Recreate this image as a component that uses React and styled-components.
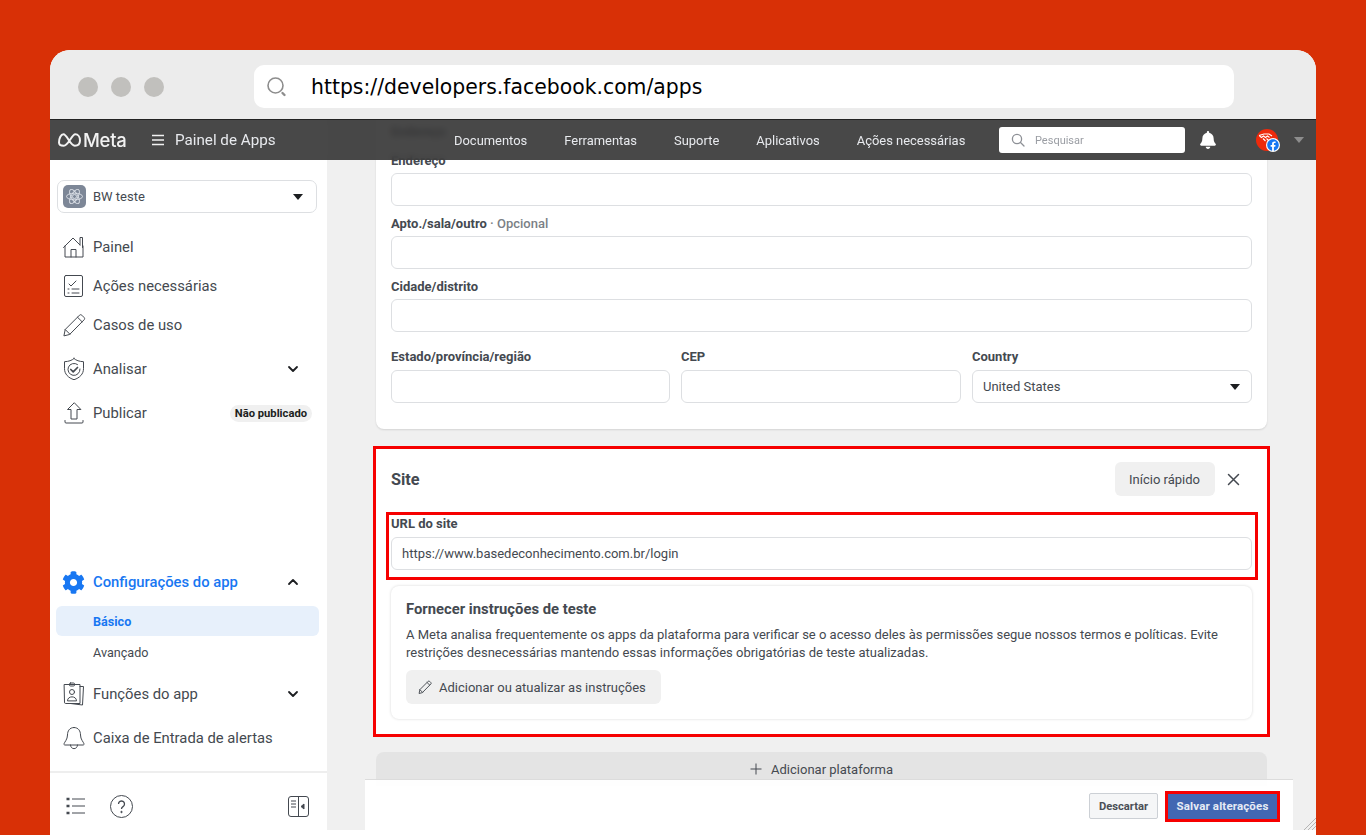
import React from 'react';
import styled, { createGlobalStyle } from 'styled-components';
import { FaBell, FaCog, FaFacebook } from 'react-icons/fa';

const Global = createGlobalStyle`
  html, body { margin: 0; padding: 0; height: 100%; overflow: hidden; }
  body { background: #d83006; font-family: Roboto, "Liberation Sans", sans-serif; color: #444950; }
  * { box-sizing: border-box; }
`;

const Page = styled.div`
  height: 835px;
  padding: 50px 50px 0;
`;
const Win = styled.div`
  height: 785px;
  display: flex;
  flex-direction: column;
  border-radius: 20px 20px 0 0;
  overflow: hidden;
  background: #fff;
`;
const Chrome = styled.header`
  height: 70px;
  flex: none;
  display: flex;
  align-items: flex-start;
  padding: 15px 0 0 28px;
  background: #ececec;
  border-bottom: 1px solid #222;
`;
const Dots = styled.div`
  display: flex;
  gap: 13px;
  margin-top: 12px;
`;
const Dot = styled.span`
  width: 20px;
  height: 20px;
  border-radius: 50%;
  background: #c1c0bd;
`;
const Address = styled.div`
  width: 980px;
  height: 43px;
  margin-left: 90px;
  display: flex;
  align-items: center;
  gap: 23px;
  padding-left: 12px;
  background: #fff;
  border-radius: 10px;
  font: 20.4px "DejaVu Sans", sans-serif;
  color: #000;
`;
const Body = styled.div`
  position: relative;
  flex: 1;
  min-height: 0;
  display: flex;
`;
const Topbar = styled.nav`
  position: absolute;
  z-index: 5;
  top: 0;
  left: 0;
  right: 0;
  height: 40px;
  display: flex;
  align-items: center;
  padding-left: 8px;
  background: rgba(52, 52, 52, 0.9);
  backdrop-filter: blur(3px);
  color: #e8eaee;
`;
const Brand = styled.div`
  width: 94px;
  display: flex;
  align-items: center;
  gap: 2px;
  font: 500 18.5px Inter, sans-serif;
  letter-spacing: -0.3px;
  color: #f2f2f2;
`;
const MenuBtn = styled.div`
  display: flex;
  align-items: center;
  gap: 11px;
  width: 302px;
  font-size: 15.2px;
`;
const NavLinks = styled.div`
  display: flex;
  gap: 37px;
  width: 545px;
  font-size: 12.95px;
`;
const Search = styled.div`
  width: 186px;
  height: 26px;
  display: flex;
  align-items: center;
  gap: 10px;
  padding-left: 12px;
  background: #fff;
  border-radius: 3px;
  font-size: 11px;
  color: #9a9da3;
`;
const BellWrap = styled.div`
  display: flex;
  margin-left: 14px;
  color: #fff;
  font-size: 18px;
`;
const Avatar = styled.div`
  position: relative;
  width: 22px;
  height: 22px;
  margin-left: 39px;
  border-radius: 50%;
  background: #ee2a0c;
`;
const FbBadge = styled.span`
  position: absolute;
  right: -2px;
  bottom: -1px;
  width: 14px;
  height: 14px;
  display: flex;
  align-items: center;
  justify-content: center;
  border-radius: 50%;
  background: #fff;
  color: #1877f2;
  font-size: 12px;
`;
const GrayCaret = styled.span`
  width: 0;
  height: 0;
  margin-left: 16px;
  margin-top: -1px;
  border-left: 5px solid transparent;
  border-right: 5px solid transparent;
  border-top: 6px solid #8d8d8d;
`;
const Sidebar = styled.aside`
  width: 277px;
  flex: none;
  display: flex;
  flex-direction: column;
  padding-top: 60px;
  background: #fff;
  font-size: 14.8px;
`;
const AppSelect = styled.div`
  height: 33px;
  margin: 0 10px 14px 7px;
  display: flex;
  align-items: center;
  padding: 0 13px 0 5px;
  gap: 7px;
  border: 1px solid #dddfe2;
  border-radius: 7px;
  font-size: 13px;
`;
const AppIcon = styled.span`
  width: 23px;
  height: 23px;
  display: flex;
  align-items: center;
  justify-content: center;
  border-radius: 5px;
  background: #7d8797;
`;
const Grow = styled.span`
  flex: 1;
`;
const Caret = styled.span`
  width: 0;
  height: 0;
  border-left: 5.5px solid transparent;
  border-right: 5.5px solid transparent;
  border-top: 6px solid #1c1e21;
`;
const NavGroup = styled.div`
  padding: 0 8px 0 6px;
  margin-top: ${p => p.$mt || 0}px;
`;
const Row = styled.div`
  height: ${p => p.$h || 39}px;
  margin-bottom: ${p => p.$mb || 0}px;
  display: flex;
  align-items: center;
  color: ${p => (p.$active ? '#1877f2' : '#444950')};
  font-weight: ${p => (p.$active ? 500 : 400)};
`;
const IconSlot = styled.span`
  width: 37px;
  flex: none;
  display: flex;
  justify-content: flex-start;
  padding-left: 6px;
  color: ${p => p.$color || '#444950'};
`;
const Chevron = styled.svg`
  margin-right: 20px;
  color: #1c1e21;
`;
const Badge = styled.span`
  margin-right: 7px;
  padding: 2px 5px;
  border-radius: 9px;
  background: #f0f0f0;
  font-size: 11.2px;
  font-weight: 700;
  color: #1c1e21;
`;
const SubItem = styled.div`
  height: ${p => (p.$active ? 30 : 32)}px;
  margin-bottom: ${p => (p.$mb || 0)}px;
  display: flex;
  align-items: center;
  padding-left: 37px;
  border-radius: 6px;
  font-size: 12.6px;
  font-weight: ${p => (p.$active ? 700 : 400)};
  color: ${p => (p.$active ? '#1877f2' : '#444950')};
  background: ${p => (p.$active ? '#e7f0fb' : 'transparent')};
`;
const SideFooter = styled.div`
  height: 64px;
  margin-top: 11px;
  display: flex;
  align-items: center;
  gap: 24px;
  padding: 4px 18px 0 16px;
  border-top: 2px solid #eeeeee;
  color: #444950;
`;
const Main = styled.main`
  position: relative;
  flex: 1;
  min-width: 0;
  display: flex;
  flex-direction: column;
  background: #fff;
`;
const Scroll = styled.div`
  flex: 1;
  min-height: 0;
  overflow: hidden;
  padding: 0 49px;
  background: #f0f0f0;
`;
const Strip = styled.div`
  height: 5px;
  flex: none;
  background: #fff;
`;
const Card = styled.section`
  padding: ${p => p.$pt}px 15px ${p => p.$pb}px;
  margin-top: ${p => p.$mt || 0}px;
  background: #fff;
  border-radius: ${p => (p.$flagged ? 0 : '0 0 8px 8px')};
  box-shadow: 0 1px 2px rgba(0, 0, 0, 0.12);
  outline: ${p => (p.$flagged ? '3px solid #f60000' : 'none')};
`;
const Label = styled.label`
  display: block;
  height: 16px;
  margin-top: ${p => p.$mt || 0}px;
  margin-bottom: ${p => (p.$mb === undefined ? 5 : p.$mb)}px;
  font-size: 13px;
  line-height: 17px;
  font-weight: 700;
  color: #444950;
`;
const Optional = styled.span`
  font-weight: 500;
  color: #7b7f86;
`;
const Input = styled.div`
  height: 33px;
  display: flex;
  align-items: center;
  justify-content: space-between;
  padding: 0 11px 0 10px;
  border: 1px solid #dddfe2;
  border-radius: 6px;
  background: #fff;
  font-size: 13px;
  color: #444950;
`;
const ThreeCol = styled.div`
  display: grid;
  grid-template-columns: 279px 280px 280px;
  column-gap: 11px;
`;
const SiteHead = styled.div`
  height: 34px;
  display: flex;
  align-items: center;
`;
const SiteTitle = styled.h2`
  flex: 1;
  margin: 0;
  font-size: 16.3px;
  font-weight: 700;
  color: #444950;
`;
const SoftButton = styled.button`
  height: 34px;
  display: flex;
  align-items: center;
  gap: 7px;
  padding: 0 15px 0 ${p => p.$pl || 14}px;
  border: 0;
  border-radius: 6px;
  background: #f0f0f0;
  font: 13px Roboto, sans-serif;
  color: #444950;
`;
const CloseIcon = styled.svg`
  margin: 0 12px 0 12px;
  color: #444950;
`;
const UrlBox = styled.div`
  margin: 19px -3px 0 -2px;
  padding: 0 3px 7px 2px;
  outline: 3px solid #f60000;
`;
const HelpCard = styled.div`
  margin-top: 9px;
  padding: 15px;
  height: 133px;
  border-radius: 8px;
  box-shadow: 0 0 3px rgba(0, 0, 0, 0.16);
`;
const HelpTitle = styled.h3`
  margin: 0;
  font-size: 14.8px;
  line-height: 17px;
  font-weight: 700;
  color: #444950;
`;
const HelpText = styled.p`
  margin: 8px 0 8px;
  font-size: 13px;
  line-height: 18px;
  color: #444950;
`;
const AddBar = styled.div`
  height: 34px;
  margin-top: 18px;
  display: flex;
  align-items: center;
  justify-content: center;
  gap: 9px;
  background: #e4e4e4;
  border-radius: 8px 8px 0 0;
  font-size: 13px;
  color: #444950;
`;
const SaveBar = styled.div`
  position: absolute;
  left: 38px;
  right: 23px;
  bottom: 5px;
  height: 51px;
  display: flex;
  align-items: center;
  justify-content: flex-end;
  gap: 10px;
  padding: 2px 16px 0 0;
  background: rgba(255, 255, 255, 0.94);
  border-top: 1px solid #dcdcdc;
`;
const Discard = styled.button`
  width: 69px;
  height: 26px;
  padding: 0;
  border: 1px solid #ccd0d5;
  border-radius: 2px;
  background: #f5f6f7;
  font: 700 11.2px Roboto, sans-serif;
  color: #4b4f56;
`;
const Save = styled.button`
  width: 109px;
  height: 25px;
  padding: 0;
  border: 0;
  background: #4267b2;
  outline: 3px solid #f60000;
  font: 700 11.5px Roboto, sans-serif;
  letter-spacing: 0.15px;
  color: #e6ebf5;
`;
const Grip = styled.svg`
  position: absolute;
  right: 0;
  bottom: 5px;
  color: #b5b5b5;
`;

const Ico = ({ children, w = 24, h = 24, vb, sw = 1 }) => (
  <svg width={w} height={h} viewBox={vb || `0 0 ${w} ${h}`} fill="none" stroke="currentColor" strokeWidth={sw} strokeLinecap="round" strokeLinejoin="round">
    {children}
  </svg>
);

const Down = () => (
  <Chevron width="12" height="8" viewBox="0 0 12 8" fill="none" stroke="currentColor" strokeWidth="1.8" strokeLinecap="round" strokeLinejoin="round">
    <path d="M2 2l4 4 4-4" />
  </Chevron>
);
const Up = () => (
  <Chevron width="12" height="8" viewBox="0 0 12 8" fill="none" stroke="currentColor" strokeWidth="1.8" strokeLinecap="round" strokeLinejoin="round">
    <path d="M2 6l4-4 4 4" />
  </Chevron>
);
const Pencil = ({ s = 24, sw = 1 }) => (
  <svg width={s} height={s} viewBox="0 0 24 24" fill="none" stroke="currentColor" strokeWidth={sw} strokeLinejoin="round" strokeLinecap="round">
    <path d="M2 22.5l1.2-6L17.5 2.2c.7-.7 1.6-.7 2.3 0l2.3 2.3c.7.7.7 1.6 0 2.3L7.9 21.2z" />
    <path d="M3.2 16.5l4.7 4.7M15.5 4.2l4.6 4.6" />
  </svg>
);

export default function App() {
  return (
    <Page>
      <Global />
      <Win>
        <Chrome>
          <Dots><Dot /><Dot /><Dot /></Dots>
          <Address>
            <svg width="22" height="22" viewBox="0 0 22 22" fill="none" stroke="#8d8d8d" strokeLinecap="round">
              <circle cx="9.5" cy="9.5" r="7.5" strokeWidth="1.6" />
              <path d="M16.5 17l2 2" strokeWidth="2.4" />
            </svg>
            <span>https://developers.facebook.com/apps</span>
          </Address>
        </Chrome>
        <Body>
          <Topbar>
            <Brand>
              <svg width="23" height="14" viewBox="0 0 23 14" fill="none" stroke="#f2f2f2" strokeWidth="2">
                <path d="M1 9.5C1 5 3 1.3 5.5 1.3c3.5 0 6.5 11.4 11.3 11.4 3.4 0 5.2-2.2 5.2-5.2 0-3.5-2-6.2-4.7-6.2-3.8 0-6.7 11.4-11.6 11.4C3 12.7 1 11.5 1 9.5z" />
              </svg>
              <span>Meta</span>
            </Brand>
            <MenuBtn>
              <svg width="12" height="12" viewBox="0 0 12 12" stroke="#f2f2f2" strokeWidth="1.4"><path d="M0 1.5h12M0 6h12M0 10.5h12" /></svg>
              <span>Painel de Apps</span>
            </MenuBtn>
            <NavLinks>
              <span>Documentos</span>
              <span>Ferramentas</span>
              <span>Suporte</span>
              <span>Aplicativos</span>
              <span>Ações necessárias</span>
            </NavLinks>
            <Search>
              <svg width="14" height="14" viewBox="0 0 14 14" fill="none" stroke="#8d9096" strokeWidth="1.3" strokeLinecap="round">
                <circle cx="6" cy="6" r="4.6" />
                <path d="M9.5 9.5l3.5 3.5" />
              </svg>
              <span>Pesquisar</span>
            </Search>
            <BellWrap><FaBell /></BellWrap>
            <Avatar>
              <svg width="22" height="22" viewBox="0 0 22 22" fill="none" stroke="#fff" strokeWidth="1.1">
                <path d="M3 6.500l5-1.500h5l3 2M3.500 7l2 1.500 2-1.500 2 1.500 2-1.500 2 1.500M7 9.500l2.500 2.500M10.500 9.500l2 2" />
              </svg>
              <FbBadge><FaFacebook /></FbBadge>
            </Avatar>
            <GrayCaret />
          </Topbar>

          <Sidebar>
            <AppSelect>
              <AppIcon>
                <svg width="19" height="19" viewBox="0 0 19 19" fill="none" stroke="#dfe3ea" strokeWidth="0.9">
                  <circle cx="9.5" cy="9.5" r="2" />
                  <ellipse cx="9.5" cy="9.5" rx="8" ry="3.3" />
                  <ellipse cx="9.5" cy="9.5" rx="8" ry="3.3" transform="rotate(60 9.5 9.5)" />
                  <ellipse cx="9.5" cy="9.5" rx="8" ry="3.3" transform="rotate(120 9.5 9.5)" />
                </svg>
              </AppIcon>
              <span>BW teste</span>
              <Grow />
              <Caret />
            </AppSelect>
            <NavGroup>
              <Row>
                <IconSlot>
                  <Ico>
                    <path d="M1.5 12.5L11 3l7 7M18 10V2.500h2.500v10M3 11v11h18V11M9 22v-7.500h5V22" />
                  </Ico>
                </IconSlot>
                <span>Painel</span>
              </Row>
              <Row>
                <IconSlot>
                  <Ico>
                    <path d="M4 1.5h15a1.5 1.5 0 0 1 1.5 1.500v18a1.500 1.500 0 0 1-1.500 1.500H4A1.500 1.500 0 0 1 2.500 21V3A1.500 1.500 0 0 1 4 1.500z" />
                    <path d="M7 10l2 2 5-5M6 15h1M10 15h7M6 19h1M10 19h7" />
                  </Ico>
                </IconSlot>
                <span>Ações necessárias</span>
              </Row>
              <Row>
                <IconSlot><Pencil /></IconSlot>
                <span>Casos de uso</span>
              </Row>
            </NavGroup>
            <NavGroup $mt={3}>
              <Row $h={44}>
                <IconSlot>
                  <Ico>
                    <path d="M12 1.500c2 2 5.500 3 9.500 3.200v7c0 5.300-3.800 9.200-9.500 11-5.700-1.800-9.500-5.700-9.500-11v-7C6.500 4.500 10 3.500 12 1.500z" />
                    <path d="M15.500 7.500a6 6 0 1 0 2.500 4.500" />
                    <path d="M8.800 12.500l2.400 2.300 4.300-4.300" strokeWidth="1.700" />
                  </Ico>
                </IconSlot>
                <span>Analisar</span>
                <Grow />
                <Down />
              </Row>
              <Row $h={44}>
                <IconSlot>
                  <Ico>
                    <path d="M12 2L5.500 8.500H9V18h6V8.500h3.500zM3 19.500v1.500q0 1 1 1h16q1 0 1-1v-1.500" />
                  </Ico>
                </IconSlot>
                <span>Publicar</span>
                <Grow />
                <Badge>Não publicado</Badge>
              </Row>
            </NavGroup>
            <Grow />
            <NavGroup>
              <Row $h={44} $mb={2} $active>
                <IconSlot $color="#1877f2"><FaCog size={23} /></IconSlot>
                <span>Configurações do app</span>
                <Grow />
                <Up />
              </Row>
              <SubItem $active>Básico</SubItem>
              <SubItem $mb={4}>Avançado</SubItem>
              <Row $h={44}>
                <IconSlot>
                  <Ico>
                    <path d="M2.500 2.500h15.500v19H3.500a1 1 0 0 1-1-1zM18 4.500h3.500l-1 18.500-12-1.500" />
                    <rect x="7.500" y="1" width="5" height="3" rx="1" />
                    <circle cx="10" cy="10" r="2.500" />
                    <path d="M5.500 18.500c0-5 9-5 9 0z" />
                  </Ico>
                </IconSlot>
                <span>Funções do app</span>
                <Grow />
                <Down />
              </Row>
              <Row $h={44}>
                <IconSlot>
                  <Ico>
                    <path d="M12 1.500c-4.500 0-6.500 3.500-6.500 7.500 0 4.500-3 7-3.500 8.800-.2.700.2 1.200 1 1.200h18c.8 0 1.200-.5 1-1.200-.5-1.800-3.500-4.300-3.500-8.800 0-4-2-7.500-6.500-7.500z" />
                    <path d="M8.500 19c0 5 7 5 7 0" />
                  </Ico>
                </IconSlot>
                <span>Caixa de Entrada de alertas</span>
              </Row>
            </NavGroup>
            <SideFooter>
              <svg width="20" height="18" viewBox="0 0 20 18" fill="none" stroke="currentColor">
                <path d="M6 2h13M6 9h13M6 16h13" strokeWidth="1" />
                <path d="M0.500 2h3M0.500 9h3M0.500 16h3" strokeWidth="2.400" />
              </svg>
              <svg width="23" height="23" viewBox="0 0 23 23" fill="none" stroke="currentColor">
                <circle cx="11.500" cy="11.500" r="11" strokeWidth="1" />
                <path d="M8.500 9a3 3 0 1 1 4.500 2.600c-1 .6-1.500 1.200-1.500 2.400" strokeWidth="1.300" />
                <circle cx="11.500" cy="17" r="0.700" fill="currentColor" />
              </svg>
              <Grow />
              <svg width="21" height="21" viewBox="0 0 21 21" fill="none" stroke="currentColor" strokeWidth="1">
                <rect x="0.500" y="0.500" width="20" height="20" rx="2.500" />
                <path d="M10.500 0.500v20M3 5h5M3 8h5M3 11h5" />
                <path d="M16 8v5l-3-2.500z" fill="currentColor" />
              </svg>
            </SideFooter>
          </Sidebar>

          <Main>
            <Scroll>
              <Card $pt={3} $pb={26}>
                <Label $mb={13}>Endereço</Label>
                <Label>Endereço</Label>
                <Input />
                <Label $mt={9}>Apto./sala/outro <Optional>· Opcional</Optional></Label>
                <Input />
                <Label $mt={9}>Cidade/distrito</Label>
                <Input />
                <ThreeCol>
                  <div>
                    <Label $mt={16} $mb={6}>Estado/província/região</Label>
                    <Input />
                  </div>
                  <div>
                    <Label $mt={16} $mb={6}>CEP</Label>
                    <Input />
                  </div>
                  <div>
                    <Label $mt={16} $mb={6}>Country</Label>
                    <Input>
                      <span>United States</span>
                      <Caret />
                    </Input>
                  </div>
                </ThreeCol>
              </Card>

              <Card $flagged $mt={20} $pt={13} $pb={15}>
                <SiteHead>
                  <SiteTitle>Site</SiteTitle>
                  <SoftButton>Início rápido</SoftButton>
                  <CloseIcon width="13" height="13" viewBox="0 0 13 13" fill="none" stroke="currentColor" strokeWidth="1.500" strokeLinecap="round">
                    <path d="M1.500 1.500l10 10M11.500 1.500l-10 10" />
                  </CloseIcon>
                </SiteHead>
                <UrlBox>
                  <Label $mb={6}>URL do site</Label>
                  <Input>https://www.basedeconhecimento.com.br/login</Input>
                </UrlBox>
                <HelpCard>
                  <HelpTitle>Fornecer instruções de teste</HelpTitle>
                  <HelpText>
                    A Meta analisa frequentemente os apps da plataforma para verificar se o acesso deles às permissões segue nossos termos e políticas. Evite restrições desnecessárias mantendo essas informações obrigatórias de teste atualizadas.
                  </HelpText>
                  <SoftButton $pl={12}>
                    <Pencil s={14} sw={1.6} />
                    Adicionar ou atualizar as instruções
                  </SoftButton>
                </HelpCard>
              </Card>

              <AddBar>
                <svg width="12" height="12" viewBox="0 0 12 12" stroke="#444950" strokeWidth="1"><path d="M6 0.500v11M0.500 6h11" /></svg>
                <span>Adicionar plataforma</span>
              </AddBar>
            </Scroll>
            <Strip />
            <SaveBar>
              <Discard>Descartar</Discard>
              <Save>Salvar alterações</Save>
            </SaveBar>
            <Grip width="13" height="13" viewBox="0 0 13 13" stroke="currentColor" strokeWidth="1">
              <path d="M13 1L1 13M13 5L5 13M13 9L9 13" />
            </Grip>
          </Main>
        </Body>
      </Win>
    </Page>
  );
}
